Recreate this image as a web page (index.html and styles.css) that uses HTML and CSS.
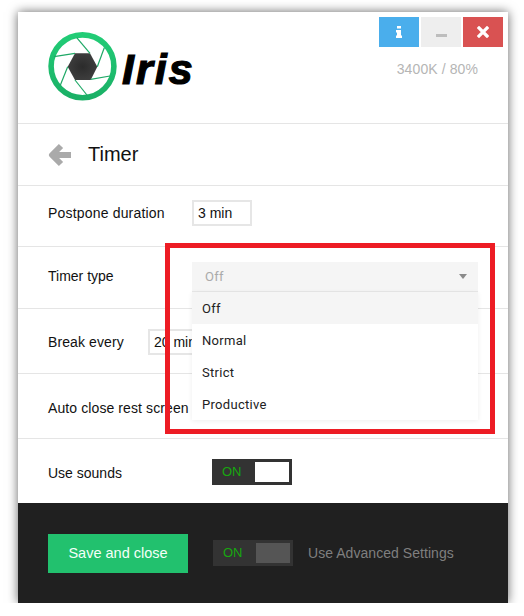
FILE: index.html
```html
<!DOCTYPE html>
<html>

<head>
  <title>Iris</title>

  <link rel="stylesheet" href="styles.css">
</head>

<body>
  <div class="window">
    <!-- Logo and window buttons -->
    <div class="header">
      <div class="brand">
        <svg class="brand-icon" width="70" height="70" viewBox="0 0 70 70">
          <defs>
            <radialGradient id="hole">
              <stop offset="0" stop-color="#2b2b2b" />
              <stop offset="1" stop-color="#3d3d3d" />
            </radialGradient>
            <linearGradient id="ring" x1="0" y1="0" x2="0" y2="1">
              <stop offset="0" stop-color="#22cc76" />
              <stop offset="1" stop-color="#1ab066" />
            </linearGradient>
          </defs>
          <circle cx="34.5" cy="34.3" r="31.4" fill="#fff" stroke="url(#ring)" stroke-width="5.6" />
          <polygon points="19.7,34.7 27,21.3 42,21.3 49.3,34.7 42.7,48 27,48" fill="url(#hole)" />
          <g fill="none" stroke="#1fa866" stroke-width="1.2">
            <path d="M42,21.3 L28.7,5.7" />
            <path d="M49.3,34.7 L56.3,15.7" />
            <path d="M42.7,47.3 L62,44" />
            <path d="M27,48 L39.7,64" />
            <path d="M19.7,34.7 L12,54" />
            <path d="M27,21.3 L6,24.7" />
          </g>
        </svg>
        <span class="brand-name">Iris</span>
      </div>
      <div class="header-right">
        <div class="window-buttons">
          <div class="win-btn win-info">
            <svg width="10" height="12" viewBox="0 0 10 12">
              <path d="M3,0 H7 V2.6 H3 Z M2,4 H7 V9.5 H8 V12 H2 V9.5 H3 V6.5 H2 Z" fill="#fff" />
            </svg>
          </div>
          <div class="win-btn win-min">
            <div class="min-bar"></div>
          </div>
          <div class="win-btn win-close">
            <svg width="12" height="12" viewBox="0 0 12 12">
              <path d="M2,2 L10,10 M10,2 L2,10" stroke="#fff" stroke-width="3.2" stroke-linecap="square" />
            </svg>
          </div>
        </div>
        <div class="temp">3400K / 80%</div>
      </div>
    </div>

    <div class="title-row">
      <svg class="back" width="24" height="24" viewBox="0 0 24 24">
        <path d="M13,3 L4,12 L13,21 M5,12 H23" fill="none" stroke="#aaa" stroke-width="6" stroke-linejoin="round" />
      </svg>
      <span class="title">Timer</span>
    </div>

    <div class="row row-postpone">
      <div class="label">Postpone duration</div>
      <div class="field field-postpone">3 min</div>
    </div>

    <div class="row row-type">
      <div class="label">Timer type</div>
      <div class="select">
        <span>Off</span>
        <div class="caret"></div>
      </div>
    </div>

    <div class="row row-break">
      <div class="label">Break every</div>
      <div class="field field-break">20 min</div>
    </div>

    <div class="row row-auto">
      <div class="label">Auto close rest screen</div>
    </div>

    <div class="row row-sounds">
      <div class="label">Use sounds</div>
      <div class="toggle toggle-light">
        <span class="toggle-on">ON</span>
        <div class="toggle-knob"></div>
      </div>
    </div>

    <!-- Bottom bar -->
    <div class="footer">
      <button class="save">Save and close</button>
      <div class="toggle toggle-dark">
        <span class="toggle-on">ON</span>
        <div class="toggle-knob"></div>
      </div>
      <span class="advanced">Use Advanced Settings</span>
    </div>

    <!-- Open select menu -->
    <div class="menu">
      <div class="menu-item active">Off</div>
      <div class="menu-item">Normal</div>
      <div class="menu-item">Strict</div>
      <div class="menu-item">Productive</div>
    </div>

    <!-- Red annotation box -->
    <div class="annotation"></div>
  </div>
</body>

</html>
```

FILE: styles.css
```css
html,
body {
  margin: 0;
  padding: 0;
  background: #FFFFFF;
  font-family: "Liberation Sans", Arial, sans-serif;
}

body {
  padding: 12px 0 0 18px;
}

.window {
  width: 490px;
  position: relative;
  background: #FFFFFF;
  box-shadow: 0 0 10px rgba(0, 0, 0, 0.6);
  color: #111;
}

.header {
  height: 106px;
  display: flex;
  justify-content: space-between;
  padding: 5px 5px 0 30px;
  border-bottom: 1px solid #E5E5E5;
}

.brand {
  display: flex;
  align-items: flex-end;
  padding-top: 15px;
  height: 70px;
}

.brand-icon {
  display: block;
  margin-right: 4px;
}

.brand-name {
  font-size: 43px;
  font-weight: bold;
  font-style: italic;
  color: #000;
  line-height: 50px;
  letter-spacing: 2px;
  -webkit-text-stroke: 1.2px #000;
  margin-bottom: 8px;
}

.header-right {
  display: flex;
  flex-direction: column;
  align-items: flex-end;
}

.window-buttons {
  display: flex;
  gap: 2px;
}

.win-btn {
  width: 40px;
  height: 30px;
  display: flex;
  align-items: center;
  justify-content: center;
}

.win-info {
  background: #4AAEEC;
}

.win-min {
  background: #EEEEEE;
}

.min-bar {
  width: 11px;
  height: 3px;
  margin-top: 6px;
  background: #BDBDBD;
}

.win-close {
  background: #D95252;
}

.temp {
  font-size: 14px;
  color: #B5B5B5;
  letter-spacing: 0.1px;
  margin: 14px 25px 0 0;
}

.title-row {
  height: 61px;
  display: flex;
  align-items: center;
  padding-left: 30px;
  border-bottom: 1px solid #E5E5E5;
}

.title {
  font-size: 20px;
  margin-left: 16px;
}

.row {
  display: flex;
  align-items: center;
  box-sizing: border-box;
  padding-left: 30px;
  border-bottom: 1px solid #E5E5E5;
  font-size: 14px;
}

.row-postpone {
  height: 61px;
  padding-bottom: 6px;
}

.row-type {
  height: 62px;
  padding-bottom: 1px;
}

.row-break {
  height: 65px;
  padding-top: 2px;
}

.row-auto {
  height: 65px;
  padding-top: 4px;
}

.row-sounds {
  height: 64px;
  padding-top: 2px;
  border-bottom: none;
}

.row-postpone .label {
  width: 144px;
  letter-spacing: 0.18px;
}

.row-type .label {
  width: 144px;
  margin-bottom: 2px;
}

.row-break .label {
  width: 100px;
  letter-spacing: 0.1px;
}

.row-auto .label {
  letter-spacing: 0.1px;
}

.row-sounds .label {
  width: 164px;
  margin-top: 2px;
}

.field {
  height: 26px;
  line-height: 22px;
  box-sizing: border-box;
  border: 2px solid #E6E6E6;
  padding-left: 4px;
  font-size: 14px;
}

.field-postpone {
  width: 60px;
}

.field-break {
  width: 60px;
}

.select {
  width: 286px;
  height: 30px;
  box-sizing: border-box;
  display: flex;
  align-items: center;
  justify-content: space-between;
  padding: 0 11px 0 13px;
  background: #F5F5F5;
  border-bottom: 1px solid #E8E8E8;
  color: #AAAAAA;
  font-family: Roboto, sans-serif;
  font-size: 13px;
  letter-spacing: 0.3px;
}

.caret {
  width: 0;
  height: 0;
  border-left: 4px solid transparent;
  border-right: 4px solid transparent;
  border-top: 5px solid #8A8A8A;
}

.toggle {
  width: 80px;
  height: 26px;
  box-sizing: border-box;
  display: flex;
  align-items: center;
  justify-content: space-between;
  padding: 3px;
  background: #333333;
}

.toggle-on {
  color: #17A80F;
  font-size: 13px;
  margin-left: 7px;
  margin-top: -2px;
}

.toggle-knob {
  width: 34px;
  height: 20px;
}

.toggle-light .toggle-knob {
  background: #FFFFFF;
}

.toggle-dark .toggle-knob {
  background: #555555;
}

.footer {
  height: 100px;
  display: flex;
  align-items: center;
  padding-left: 30px;
  background: #202020;
}

.save {
  width: 140px;
  height: 39px;
  border: none;
  padding: 0;
  background: #22C16E;
  color: #F4FFF8;
  font-family: inherit;
  font-size: 14.5px;
}

.toggle-dark {
  margin-left: 25px;
}

.advanced {
  margin-left: 15px;
  color: #7F7F7F;
  font-size: 14px;
  letter-spacing: 0.05px;
}

.menu {
  position: absolute;
  left: 174px;
  top: 280px;
  width: 286px;
  background: #FFFFFF;
  box-shadow: 0 1px 5px rgba(0, 0, 0, 0.07);
  font-family: Roboto, sans-serif;
  font-size: 13px;
  letter-spacing: 0.3px;
  color: #222;
}

.menu-item {
  height: 32px;
  line-height: 34px;
  padding-left: 10px;
}

.menu-item.active {
  background: #F5F5F5;
}

.annotation {
  position: absolute;
  left: 147px;
  top: 231px;
  width: 330px;
  height: 191px;
  box-sizing: border-box;
  border: 5px solid #ED1C24;
  pointer-events: none;
}
```
